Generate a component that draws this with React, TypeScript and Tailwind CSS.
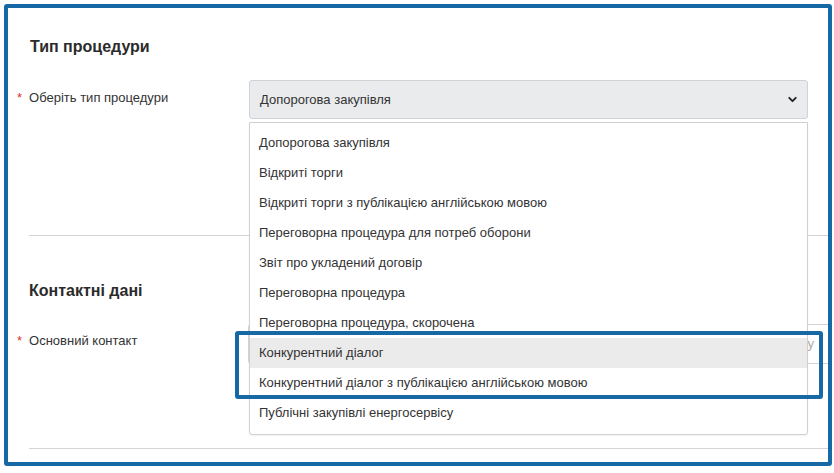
import React from 'react';
import { ChevronDown } from 'lucide-react';

const procedureTypes = [
    'Допорогова закупівля',
    'Відкриті торги',
    'Відкриті торги з публікацією англійською мовою',
    'Переговорна процедура для потреб оборони',
    'Звіт про укладений договір',
    'Переговорна процедура',
    'Переговорна процедура, скорочена',
    'Конкурентний діалог',
    'Конкурентний діалог з публікацією англійською мовою',
    'Публічні закупівлі енергосервісу',
];

const Label: React.FC<{ text: string }> = ({ text }) => (
    <div className="w-[240px] shrink-0 pl-[9px] text-[13px] leading-[18px] text-[#333]">
        <span className="text-[#d9342b] mr-[7px]">*</span>
        {text}
    </div>
);

export default function App() {
    const hovered = 'Конкурентний діалог';

    return (
        <div className="w-[834px] h-[473px] bg-white p-[4px] font-['Liberation_Sans',Arial,sans-serif]">
            <div className="relative w-[828px] h-[462px] border-4 border-[#1769a5] rounded-[3px] overflow-hidden">
                {/* Procedure type */}
                <div className="pt-[29px]">
                    <h2 className="pl-[22px] text-[16px] leading-[20px] font-bold text-[#2b2b2b]">Тип процедури</h2>
                    <div className="flex items-start mt-[23px]">
                        <div className="pt-[9px]">
                            <Label text="Оберіть тип процедури" />
                        </div>
                        <div className="relative w-[559px] ml-[1px]">
                            <div className="h-[39px] flex items-center justify-between px-[10px] bg-[#eaebed] border border-[#cfd2d6] rounded-[3px] text-[13px] text-[#333]">
                                <span>Допорогова закупівля</span>
                                <ChevronDown size={13} strokeWidth={3.5} className="text-[#222] mr-[-2px]" />
                            </div>

                            {/* Open options list */}
                            <div className="absolute z-10 left-0 right-0 top-[42px] bg-white border border-[#d0d0d0] rounded-b-[3px] pt-[5px] pb-[6px] shadow-[0_1px_2px_rgba(0,0,0,0.05)]">
                                {procedureTypes.map(item => (
                                    <div
                                        key={item}
                                        className={`h-[30px] flex items-center px-[9px] text-[13px] text-[#333] ${item === hovered ? 'bg-[#ebebeb]' : ''}`}
                                    >
                                        {item}
                                    </div>
                                ))}
                            </div>
                        </div>
                    </div>
                </div>

                <div className="ml-[21px] mt-[116px] border-t border-[#d4d4d4]" />

                {/* Contacts */}
                <div className="pt-[45px]">
                    <h2 className="pl-[21px] text-[16px] leading-[20px] font-bold text-[#2b2b2b]">Контактні дані</h2>
                    <div className="flex items-start mt-[23px]">
                        <div className="pt-[8px]">
                            <Label text="Основний контакт" />
                        </div>
                        <div className="flex-1 mr-[-12px] h-[40px] flex items-center justify-end pr-[25px] border border-[#d4d4d4] rounded-[3px] text-[13px] text-[#aaa]">
                            Оберіть контактну особу
                        </div>
                    </div>
                </div>

                <div className="ml-[21px] mt-[84px] border-t border-[#d4d4d4]" />

                {/* Annotation box */}
                <div className="absolute z-20 left-[227px] top-[323px] w-[588px] h-[68px] border-4 border-[#1769a5] rounded-[3px]" />
            </div>
        </div>
    );
}
